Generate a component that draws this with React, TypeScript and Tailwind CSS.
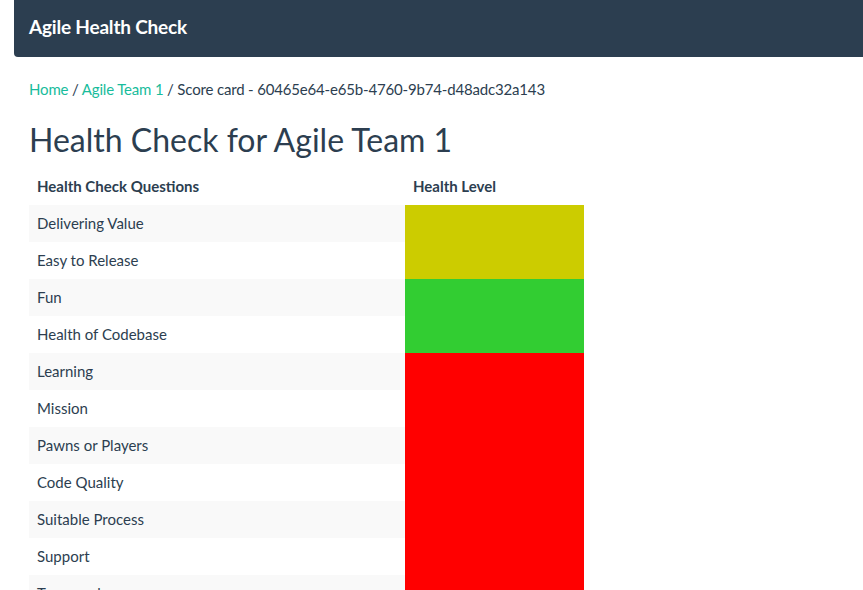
import React from 'react';

type Row = { question: string; level: 'ok' | 'good' | 'bad' };

const rows: Row[] = [
  { question: 'Delivering Value', level: 'ok' },
  { question: 'Easy to Release', level: 'ok' },
  { question: 'Fun', level: 'good' },
  { question: 'Health of Codebase', level: 'good' },
  { question: 'Learning', level: 'bad' },
  { question: 'Mission', level: 'bad' },
  { question: 'Pawns or Players', level: 'bad' },
  { question: 'Code Quality', level: 'bad' },
  { question: 'Suitable Process', level: 'bad' },
  { question: 'Support', level: 'bad' },
  { question: 'Teamwork', level: 'bad' },
];

const levelColor: Record<Row['level'], string> = {
  ok: 'bg-[#cccc00]',
  good: 'bg-[#32cd32]',
  bad: 'bg-[#ff0000]',
};

export default function App() {
  return (
    <div className="min-h-screen bg-white text-[#2c3e50] text-[15px] font-['Lato','Liberation_Sans',sans-serif]">
      {/* Navbar */}
      <div className="ml-[14px] h-[57px] bg-[#2c3e50] rounded-bl-[4px] flex items-center pl-[15px] pb-[2px]">
        <span className="text-white text-[19px] font-bold tracking-[-0.2px]">Agile Health Check</span>
      </div>

      <div className="px-[29px]">
        {/* Breadcrumb */}
        <div className="mt-[22px] leading-[21px] tracking-[-0.17px]">
          <a className="text-[#18bc9c]">Home</a>
          <span> / </span>
          <a className="text-[#18bc9c]">Agile Team 1</a>
          <span> / Score card - 60465e64-e65b-4760-9b74-d48adc32a143</span>
        </div>

        <h1 className="mt-[20px] text-[32px] leading-[40px] font-normal">Health Check for Agile Team 1</h1>

        <table className="mt-[8px] w-[555px] border-collapse">
          <thead>
            <tr>
              <th className="w-[376px] text-left font-bold px-[8px] py-[8px] leading-[21px]">Health Check Questions</th>
              <th className="w-[179px] text-left font-bold px-[8px] py-[8px] leading-[21px]">Health Level</th>
            </tr>
          </thead>
          <tbody>
            {rows.map((r, i) => (
              <tr key={r.question}>
                <td className={`px-[8px] h-[37px] leading-[21px] ${i % 2 === 0 ? 'bg-[#f9f9f9]' : 'bg-white'}`}>
                  {r.question}
                </td>
                <td className={`h-[37px] ${levelColor[r.level]}`}></td>
              </tr>
            ))}
          </tbody>
        </table>
      </div>
    </div>
  );
}
